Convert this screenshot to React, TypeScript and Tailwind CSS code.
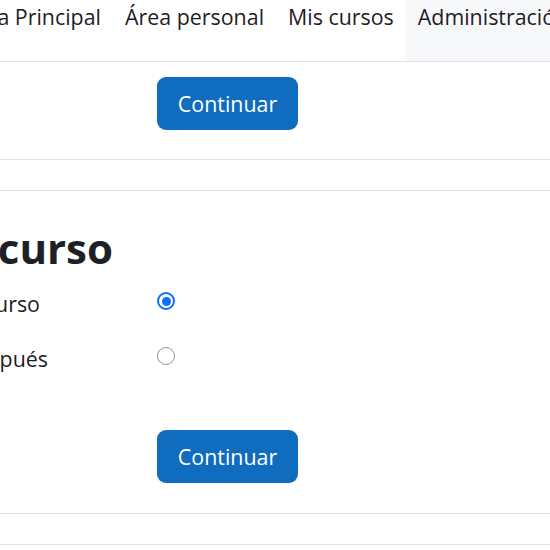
const textColor = 'text-[#1d2125]';

function NavBar() {
  return (
    <div className="flex h-[62px] border-b border-[#dee2e6] whitespace-nowrap text-[21.4px] leading-[32px]">
      <div className="w-[113px] flex justify-end shrink-0">
        <a className={`pr-3 pt-px ${textColor}`}>Página Principal</a>
      </div>
      <a className={`px-3 pt-px ${textColor}`}>Área personal</a>
      <a className={`px-3 pt-px ${textColor}`}>Mis cursos</a>
      <a className={`px-3 pt-px bg-[#f7f8fa] grow ${textColor}`}>Administración del sitio</a>
    </div>
  );
}

function ContinueButton() {
  return (
    <button
      type="button"
      className="w-[141px] h-[53px] rounded-[9px] bg-[#0f6cbf] text-white text-[21.4px] leading-[32px] flex items-center justify-center"
    >
      Continuar
    </button>
  );
}

function Radio({ checked }: { checked?: boolean }) {
  if (checked) {
    return (
      <span className="w-[18px] h-[18px] rounded-full border-2 border-[#0d6efd] bg-white flex items-center justify-center">
        <span className="w-[9px] h-[9px] rounded-full bg-[#0d6efd]" />
      </span>
    );
  }
  return <span className="w-[18px] h-[18px] rounded-full border-[1.5px] border-[#8f959e] bg-white block" />;
}

function OptionRow({ label, endPad, checked }: { label: string; endPad: string; checked?: boolean }) {
  return (
    <div className="flex h-[32px]">
      <div className={`w-[157px] shrink-0 flex justify-end whitespace-nowrap ${endPad}`}>
        <span className={textColor}>{label}</span>
      </div>
      <div className="mt-[4px]">
        <Radio checked={checked} />
      </div>
    </div>
  );
}

export default function App() {
  return (
    <div className="w-[550px] h-[550px] overflow-hidden bg-white font-['Open_Sans',sans-serif]">
      <NavBar />

      {/* Restaurar como un nuevo curso */}
      <div className="pt-[15px] pb-[29px] pl-[157px] border-b border-[#e3e3e3]">
        <ContinueButton />
      </div>
      <div className="h-[31px] border-b border-[#e3e3e3]" />

      {/* Restaurar en este curso */}
      <div className="border-b border-[#e3e3e3] pb-[30px]">
        <div className="mt-[32px] w-[113px] flex justify-end whitespace-nowrap">
          <h2 className={`text-[42px] leading-[50px] font-bold ${textColor}`}>Restaurar en este curso</h2>
        </div>
        <div className="mt-[15px] flex flex-col gap-[23px] text-[21.4px] leading-[32px]">
          <OptionRow label="Fusionar la copia de seguridad con este curso" endPad="pr-[117px]" checked />
          <OptionRow label="Borrar el contenido del curso actual y después" endPad="pr-[109px]" />
        </div>
        <div className="mt-[55px] pl-[157px]">
          <ContinueButton />
        </div>
      </div>
      <div className="h-[31px] border-b border-[#e3e3e3]" />
    </div>
  );
}
